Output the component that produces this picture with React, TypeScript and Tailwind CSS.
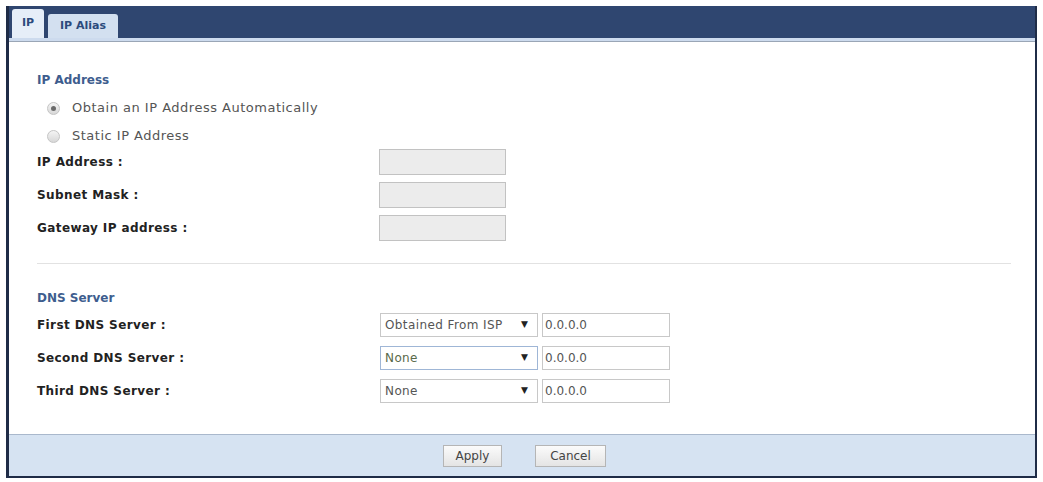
import { ChangeEvent, useState } from 'react';

const font = { fontFamily: '"DejaVu Sans", Verdana, sans-serif' };

function Radio({ checked, label }: { checked: boolean; label: string }) {
  return (
    <div className="flex items-center h-[28px] pl-[10px] gap-[12px]">
      <span className="w-[13px] h-[13px] rounded-full border border-[#c4c4c4] bg-gradient-to-b from-[#f4f4f4] to-[#d8d8d8] flex items-center justify-center">
        {checked && <span className="w-[5px] h-[5px] rounded-full bg-[#6a6a6a]" />}
      </span>
      <span className="text-[13px] tracking-[0.5px] text-[#555]">{label}</span>
    </div>
  );
}

function Select({ value, focused }: { value: string; focused?: boolean }) {
  return (
    <div
      className={`w-[158px] h-[24px] flex items-center justify-between px-[4px] bg-white border ${
        focused ? 'border-[#9fb6d6]' : 'border-[#c8c8c8]'
      }`}
    >
      <span className={`text-[12px] tracking-[0.4px] ${focused ? 'text-[#5a6a4a]' : 'text-[#555]'}`}>{value}</span>
      <span className="text-[9px] text-[#222] pr-[5px]">▼</span>
    </div>
  );
}

export default function App() {
  const [dns, setDns] = useState(['0.0.0.0', '0.0.0.0', '0.0.0.0']);
  const rows = [
    { label: 'First DNS Server :', value: 'Obtained From ISP' },
    { label: 'Second DNS Server :', value: 'None', focused: true },
    { label: 'Third DNS Server :', value: 'None' },
  ];

  return (
    <div className="w-[1043px] h-[482px] bg-white pt-[6px] pl-[6px]" style={font}>
      <div className="w-[1031px] h-[472px] flex flex-col border-l-[3px] border-r-2 border-b-2 border-[#1f2c47]">
        <div className="h-[32px] bg-[#2f4670] flex items-end gap-[4px] pl-[3px] shrink-0">
          <div className="w-[32px] h-[29px] bg-[#e6eef8] rounded-t-[3px] flex items-center justify-center text-[11px] font-bold text-[#2c4a7c]">
            IP
          </div>
          <div className="w-[70px] h-[24px] bg-[#d3e0f0] rounded-t-[3px] flex items-center justify-center text-[11px] font-bold text-[#2c4a7c]">
            IP Alias
          </div>
        </div>
        <div className="h-[3px] bg-[#cddbee] shrink-0" />
        <div className="h-[1px] bg-[#9aa6b6] shrink-0" />

        <div className="flex-1 flex flex-col pl-[28px] pr-[24px] pt-[30px]">
          <div className="text-[12px] font-semibold text-[#3e5d8e] h-[16px] leading-[16px]">IP Address</div>
          <div className="pt-[6px]">
            <Radio checked label="Obtain an IP Address Automatically" />
            <Radio checked={false} label="Static IP Address" />
          </div>
          <div className="grid grid-cols-[342px_1fr] gap-y-[7px] mt-[-1px]">
            {['IP Address :', 'Subnet Mask :', 'Gateway IP address :'].map((l) => (
              <div key={l} className="contents">
                <div className="h-[26px] flex items-center text-[12px] tracking-[0.4px] font-bold text-[#222]">{l}</div>
                <div className="w-[127px] h-[26px] bg-[#ececec] border border-[#c2c2c2]" />
              </div>
            ))}
          </div>

          <div className="h-[1px] bg-[#e2e2e2] mt-[22px]" />

          <div className="text-[12px] font-semibold text-[#3e5d8e] h-[16px] leading-[16px] mt-[26px]">DNS Server</div>
          <div className="grid grid-cols-[343px_1fr] gap-y-[9px] mt-[7px]">
            {rows.map((r, i) => (
              <div key={r.label} className="contents">
                <div className="h-[24px] flex items-center text-[12px] tracking-[0.4px] font-bold text-[#222]">{r.label}</div>
                <div className="flex items-center gap-[4px]">
                  <Select value={r.value} focused={r.focused} />
                  <input
                    value={dns[i]}
                    onChange={(e: ChangeEvent<HTMLInputElement>) =>
                      setDns(dns.map((d, j) => (j === i ? e.target.value : d)))
                    }
                    className="w-[128px] h-[24px] border border-[#c8c8c8] px-[2px] text-[12px] text-[#555] outline-none"
                    style={font}
                  />
                </div>
              </div>
            ))}
          </div>
        </div>

        <div className="h-[42px] shrink-0 bg-[#d6e3f2] border-t border-[#a9b8cc] flex items-center justify-center gap-[33px] pl-[5px]">
          <button className="w-[59px] h-[22px] bg-gradient-to-b from-[#fbfbfb] to-[#e4e4e4] border border-[#b5b5b5] text-[12px] text-[#444]" style={font}>
            Apply
          </button>
          <button className="w-[71px] h-[22px] bg-gradient-to-b from-[#fbfbfb] to-[#e4e4e4] border border-[#b5b5b5] text-[12px] text-[#444]" style={font}>
            Cancel
          </button>
        </div>
      </div>
    </div>
  );
}
